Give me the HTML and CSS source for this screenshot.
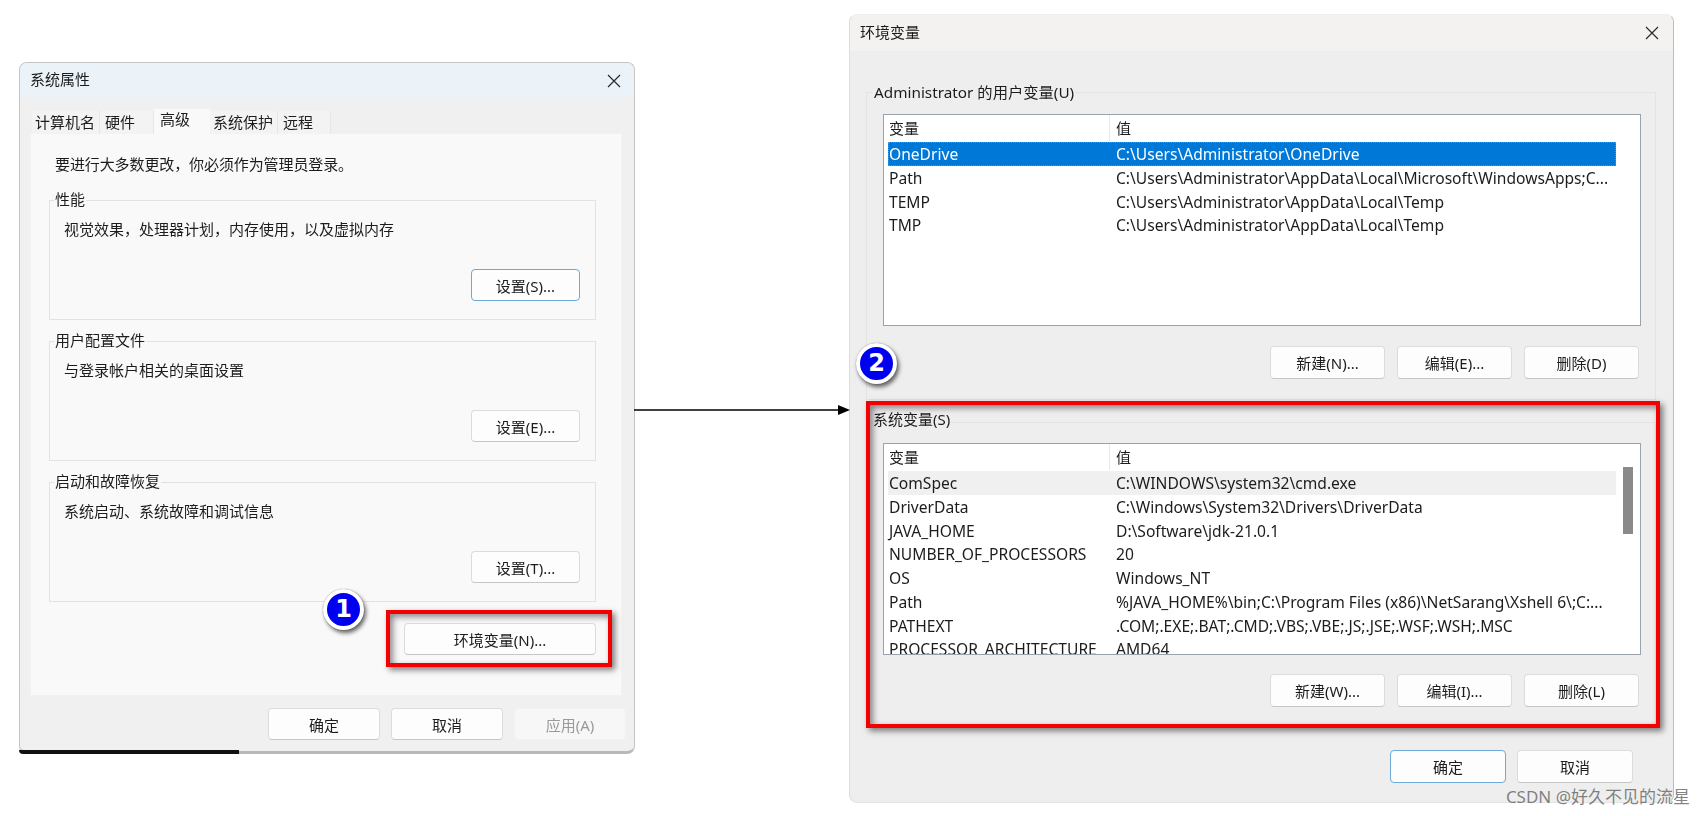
FILE: index.html
```html
<!DOCTYPE html>
<html lang="zh-CN">
<head>
    <meta charset="UTF-8">
    <meta name="viewport" content="width=device-width, initial-scale=1.0">
    <title>环境变量</title>
    <link rel="stylesheet" href="styles.css">
</head>
<body>
<div class="stage">

    <!-- left window -->
    <div class="dialog sys-dialog">
        <div class="titlebar sys-title">
            <span>系统属性</span>
            <svg class="close" viewBox="0 0 14 14"><path d="M1 1L13 13M13 1L1 13"/></svg>
        </div>
        <div class="tabs">
            <div class="tab tab-a">计算机名</div>
            <div class="tab tab-b">硬件</div>
            <div class="tab tab-c active">高级</div>
            <div class="tab tab-d">系统保护</div>
            <div class="tab tab-e">远程</div>
        </div>
        <div class="panel">
            <p class="intro">要进行大多数更改，你必须作为管理员登录。</p>

            <div class="group sys-group">
                <div class="legend">性能</div>
                <p class="desc">视觉效果，处理器计划，内存使用，以及虚拟内存</p>
                <div class="btn-row"><button class="btn btn-set focus">设置(S)...</button></div>
            </div>
            <div class="group sys-group">
                <div class="legend">用户配置文件</div>
                <p class="desc">与登录帐户相关的桌面设置</p>
                <div class="btn-row"><button class="btn btn-set">设置(E)...</button></div>
            </div>
            <div class="group sys-group">
                <div class="legend">启动和故障恢复</div>
                <p class="desc">系统启动、系统故障和调试信息</p>
                <div class="btn-row"><button class="btn btn-set">设置(T)...</button></div>
            </div>

            <div class="env-row"><button class="btn btn-env">环境变量(N)...</button></div>
        </div>
        <div class="sys-footer">
            <button class="btn btn-foot">确定</button>
            <button class="btn btn-foot">取消</button>
            <button class="btn btn-foot disabled">应用(A)</button>
        </div>
    </div>

    <!-- right window -->
    <div class="dialog env-dialog">
        <div class="titlebar env-title">
            <span>环境变量</span>
            <svg class="close" viewBox="0 0 14 14"><path d="M1 1L13 13M13 1L1 13"/></svg>
        </div>

        <div class="group env-group user-group">
            <div class="legend">Administrator 的用户变量(U)</div>
            <div class="list">
                <div class="table">
                    <div class="row head"><span>变量</span><span>值</span></div>
                    <div class="row selected"><span>OneDrive</span><span>C:\Users\Administrator\OneDrive</span></div>
                    <div class="row"><span>Path</span><span>C:\Users\Administrator\AppData\Local\Microsoft\WindowsApps;C...</span></div>
                    <div class="row"><span>TEMP</span><span>C:\Users\Administrator\AppData\Local\Temp</span></div>
                    <div class="row"><span>TMP</span><span>C:\Users\Administrator\AppData\Local\Temp</span></div>
                </div>
            </div>
            <div class="env-btns">
                <button class="btn btn-var">新建(N)...</button>
                <button class="btn btn-var">编辑(E)...</button>
                <button class="btn btn-var">删除(D)</button>
            </div>
        </div>

        <div class="group env-group system-group">
            <div class="legend">系统变量(S)</div>
            <div class="list">
                <div class="table">
                    <div class="row head"><span>变量</span><span>值</span></div>
                    <div class="row hover"><span>ComSpec</span><span>C:\WINDOWS\system32\cmd.exe</span></div>
                    <div class="row"><span>DriverData</span><span>C:\Windows\System32\Drivers\DriverData</span></div>
                    <div class="row"><span>JAVA_HOME</span><span>D:\Software\jdk-21.0.1</span></div>
                    <div class="row"><span>NUMBER_OF_PROCESSORS</span><span>20</span></div>
                    <div class="row"><span>OS</span><span>Windows_NT</span></div>
                    <div class="row"><span>Path</span><span>%JAVA_HOME%\bin;C:\Program Files (x86)\NetSarang\Xshell 6\;C:...</span></div>
                    <div class="row"><span>PATHEXT</span><span>.COM;.EXE;.BAT;.CMD;.VBS;.VBE;.JS;.JSE;.WSF;.WSH;.MSC</span></div>
                    <div class="row"><span>PROCESSOR_ARCHITECTURE</span><span>AMD64</span></div>
                </div>
                <div class="scrollbar"><div class="thumb"></div></div>
            </div>
            <div class="env-btns">
                <button class="btn btn-var">新建(W)...</button>
                <button class="btn btn-var">编辑(I)...</button>
                <button class="btn btn-var">删除(L)</button>
            </div>
        </div>

        <div class="env-footer">
            <button class="btn btn-ok focus">确定</button>
            <button class="btn btn-ok">取消</button>
        </div>
    </div>

    <!-- annotations on top of the screenshots -->
    <svg class="arrow" viewBox="0 0 216 14"><path class="arrow-line" d="M0 7H206"/><path class="arrow-head" d="M216 7L204 2V12Z"/></svg>
    <div class="redbox redbox-env"></div>
    <div class="redbox redbox-sys"></div>
    <div class="badge badge-one">1</div>
    <div class="badge badge-two">2</div>
    <div class="watermark">CSDN @好久不见的流星</div>

</div>
</body>
</html>
```

FILE: styles.css
```css
* {
    box-sizing: border-box;
}
html, body {
    margin: 0;
    padding: 0;
    background: #fff;
}
body {
    font-family: "Noto Sans", "Noto Sans CJK SC", sans-serif;
    font-size: 14px;
    color: #1c1c1c;
}
p {
    margin: 0;
}
.stage {
    position: relative;
    width: 1699px;
    height: 816px;
    overflow: hidden;
}

/* windows */
.dialog {
    position: absolute;
    border: 1px solid #c4c4c4;
    border-radius: 8px;
    filter: blur(.3px);
}
.sys-dialog {
    left: 19px;
    top: 62px;
    width: 616px;
    height: 692px;
    background: #f0f0f0;
    border-bottom: 3px solid #b9b9b9;
}
.env-dialog {
    left: 849px;
    top: 14px;
    width: 825px;
    height: 789px;
    background: #eeeeee;
    border-color: #eeeeee #bdbdbd #e4e4e4 #dcdcdc;
}
.sys-dialog::after {
    content: "";
    position: absolute;
    left: -1px;
    bottom: -3px;
    width: 220px;
    height: 4px;
    background: #111;
    border-bottom-left-radius: 8px;
}
.titlebar {
    display: flex;
    align-items: center;
    justify-content: space-between;
    font-size: 15px;
    border-radius: 7px 7px 0 0;
}
.titlebar span {
    margin-bottom: 4px;
}
.sys-title {
    height: 35px;
    padding: 0 13px 0 10px;
    background: #ebf3f8;
}
.env-title {
    height: 36px;
    padding: 0 14px 0 10px;
    background: #f4f1f1;
}
.close {
    width: 14px;
    height: 14px;
    fill: none;
    stroke: #2a2a2a;
    stroke-width: 1.2;
}

/* tabs */
.tabs {
    display: flex;
    align-items: flex-end;
    height: 25px;
    margin-top: 11px;
    padding-left: 12px;
}
.tab {
    height: 23px;
    padding-left: 3px;
    background: #f3f3f3;
    border-right: 1px solid #e6e6e6;
    font-size: 15px;
    line-height: 23px;
    white-space: nowrap;
}
.tab-a { width: 68px; }
.tab-b { width: 54px; padding-left: 5px; }
.tab-c { width: 56px; }
.tab-d { width: 68px; }
.tab-e { width: 53px; padding-left: 5px; }
.tab.active {
    height: 25px;
    padding-left: 6px;
    background: #f9f9f9;
    line-height: 21px;
    border-right: 0;
}
.panel {
    height: 562px;
    margin: 0 12px 0 10px;
    padding: 22px 25px 0 18px;
    background: #f9f9f9;
    border: 1px solid #f2f2f2;
    border-top: 0;
}
.intro {
    height: 20px;
    margin: -2px 0 26px 6px;
    font-size: 15px;
    line-height: 20px;
    letter-spacing: -.1px;
}

/* group boxes */
.group {
    border: 1px solid #e2e2e2;
}
.legend {
    width: fit-content;
    height: 20px;
    margin: -12px 0 0 -10px;
    padding: 0 1px;
    font-size: 15px;
    line-height: 20px;
    white-space: nowrap;
    background: #f9f9f9;
}
.sys-group {
    height: 120px;
    margin-bottom: 21px;
    padding-left: 14px;
    padding-right: 15px;
}
.sys-group:last-of-type {
    margin-bottom: 17px;
}
.desc {
    height: 20px;
    margin-top: 10px;
    font-size: 15px;
    line-height: 20px;
}
.btn-row {
    display: flex;
    justify-content: flex-end;
    margin-top: 30px;
}
.env-row {
    display: flex;
    justify-content: flex-end;
}

/* buttons */
.btn {
    height: 32px;
    padding: 0;
    font-family: inherit;
    font-size: 15px;
    color: #1c1c1c;
    background: #fdfdfd;
    border: 1px solid #dcdcdc;
    border-bottom-color: #c6c6c6;
    border-radius: 4px;
}
.btn.focus {
    border: 1.5px solid #6fa8d6;
}
.btn.disabled {
    color: #9a9a9a;
    background: #f7f7f7;
    border-color: #f2f2f2;
}
.btn-set { width: 109px; }
.btn-env { width: 192px; }
.btn-foot { width: 112px; }
.sys-footer {
    display: flex;
    justify-content: flex-end;
    gap: 11px;
    margin-top: 12px;
    padding-right: 8px;
}

/* environment variable groups */
.env-group {
    width: 790px;
    margin-left: 16px;
    padding: 0 16px 0 16px;
    border-color: #e3e3e3;
}
.env-group .legend {
    background: #eeeeee;
    margin-top: -11px;
    margin-left: -10px;
    font-size: 15.3px;
}
.user-group {
    height: 308px;
    margin-top: 41px;
}
.system-group {
    height: 306px;
    margin-top: 22px;
}
.system-group .legend {
    margin-top: -14px;
    margin-left: -11px;
    font-size: 15px;
}
.system-group .list {
    margin-top: 14px;
}
.system-group .env-btns {
    margin-top: 19px;
}
.list {
    display: flex;
    justify-content: space-between;
    width: 758px;
    height: 212px;
    margin-top: 12px;
    padding-left: 4px;
    background: #fff;
    border: 1px solid #9aa3ad;
    overflow: hidden;
}
.table {
    width: 728px;
    flex: none;
}
.row {
    display: grid;
    grid-template-columns: 222px 506px;
    height: 23.75px;
    font-size: 15.6px;
    line-height: 24px;
    white-space: nowrap;
}
.row span {
    padding-left: 1px;
}
.row span + span {
    padding-left: 6px;
}
.row.head {
    height: 26px;
    font-size: 15px;
    line-height: 26px;
    margin-bottom: 1px;
}
.row.head span:first-child {
    border-right: 1px solid #e8e8e8;
}
.row.selected {
    color: #fff;
    background: #0078d7;
    outline: 1px dotted #5a8fbf;
    outline-offset: -1px;
}
.row.hover {
    background: #f0f0f0;
}
.scrollbar {
    width: 24px;
    flex: none;
    padding: 23px 7px 0 7px;
}
.thumb {
    width: 10px;
    height: 67px;
    background: #8a8a8a;
}
.env-btns {
    display: flex;
    justify-content: flex-end;
    gap: 12px;
    margin-top: 20px;
}
.btn-var {
    width: 115px;
    height: 33px;
}
.env-footer {
    display: flex;
    justify-content: flex-end;
    gap: 11px;
    margin-top: 22px;
    padding-right: 40px;
}
.btn-ok {
    width: 116px;
    height: 33px;
}

/* annotations */
.arrow {
    position: absolute;
    left: 634px;
    top: 403px;
    width: 216px;
    height: 14px;
}
.arrow-line {
    stroke: #000;
    stroke-width: 1.3;
    fill: none;
}
.arrow-head {
    fill: #000;
}
.redbox {
    position: absolute;
    border: 4.5px solid #f50000;
    box-shadow: 3px 3px 6px rgba(0, 0, 0, .5), inset 3px 3px 6px rgba(0, 0, 0, .45);
    pointer-events: none;
}
.redbox-env {
    left: 386px;
    top: 610px;
    width: 226px;
    height: 57px;
}
.redbox-sys {
    left: 866px;
    top: 401px;
    width: 794px;
    height: 327px;
}
.badge {
    position: absolute;
    width: 41px;
    height: 41px;
    font-family: "DejaVu Sans", sans-serif;
    font-size: 24px;
    font-weight: 700;
    line-height: 33px;
    text-align: center;
    color: #fff;
    background: #0000f0;
    border: 4px solid #fff;
    border-radius: 50%;
    box-shadow: 2px 3px 4px rgba(0, 0, 0, .6), 0 0 1px rgba(0, 0, 0, .5);
}
.badge-one {
    left: 323px;
    top: 589px;
}
.badge-two {
    left: 856px;
    top: 343px;
}
.watermark {
    position: absolute;
    right: 9px;
    top: 785px;
    font-size: 17px;
    line-height: 24px;
    color: rgba(90, 90, 90, .75);
    white-space: nowrap;
}
```
